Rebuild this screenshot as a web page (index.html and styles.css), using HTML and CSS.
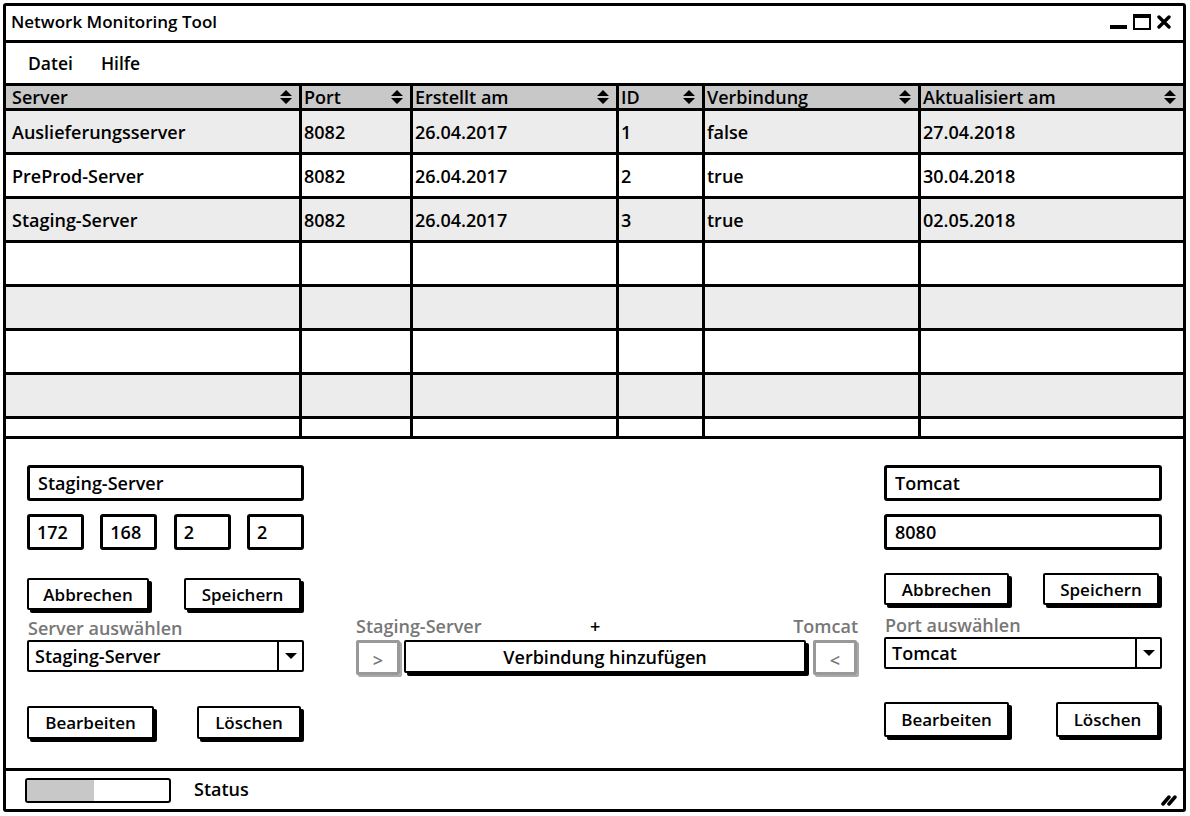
FILE: index.html
```html
<!DOCTYPE html>
<html lang="de">
<head>
<meta charset="utf-8">
<title>Network Monitoring Tool</title>
<link rel="stylesheet" href="styles.css">
</head>
<body>
<div class="window">
  <div class="titlebar">
    <span class="title">Network Monitoring Tool</span>
    <div class="winctrls">
      <span class="wc-min"></span>
      <span class="wc-max"></span>
      <svg class="wc-close" width="14" height="14" viewBox="0 0 14 14"><path d="M2 2 L12 12 M12 2 L2 12" stroke="#000" stroke-width="3.4" stroke-linecap="round"/></svg>
    </div>
  </div>
  <div class="menubar">
    <span class="menu-item">Datei</span>
    <span class="menu-item">Hilfe</span>
  </div>
  <div class="table">
    <div class="row head">
      <div class="cell">Server<svg class="sort" width="14" height="16" viewBox="0 0 14 16"><path d="M1 7 L7 1 L13 7 Z M1 9 L13 9 L7 15 Z" fill="#000"/></svg></div>
      <div class="cell">Port<svg class="sort" width="14" height="16" viewBox="0 0 14 16"><path d="M1 7 L7 1 L13 7 Z M1 9 L13 9 L7 15 Z" fill="#000"/></svg></div>
      <div class="cell">Erstellt am<svg class="sort" width="14" height="16" viewBox="0 0 14 16"><path d="M1 7 L7 1 L13 7 Z M1 9 L13 9 L7 15 Z" fill="#000"/></svg></div>
      <div class="cell">ID<svg class="sort" width="14" height="16" viewBox="0 0 14 16"><path d="M1 7 L7 1 L13 7 Z M1 9 L13 9 L7 15 Z" fill="#000"/></svg></div>
      <div class="cell">Verbindung<svg class="sort" width="14" height="16" viewBox="0 0 14 16"><path d="M1 7 L7 1 L13 7 Z M1 9 L13 9 L7 15 Z" fill="#000"/></svg></div>
      <div class="cell">Aktualisiert am<svg class="sort" width="14" height="16" viewBox="0 0 14 16"><path d="M1 7 L7 1 L13 7 Z M1 9 L13 9 L7 15 Z" fill="#000"/></svg></div>
    </div>
    <div class="row alt">
      <div class="cell">Auslieferungsserver</div><div class="cell">8082</div><div class="cell">26.04.2017</div><div class="cell">1</div><div class="cell">false</div><div class="cell">27.04.2018</div>
    </div>
    <div class="row">
      <div class="cell">PreProd-Server</div><div class="cell">8082</div><div class="cell">26.04.2017</div><div class="cell">2</div><div class="cell">true</div><div class="cell">30.04.2018</div>
    </div>
    <div class="row alt">
      <div class="cell">Staging-Server</div><div class="cell">8082</div><div class="cell">26.04.2017</div><div class="cell">3</div><div class="cell">true</div><div class="cell">02.05.2018</div>
    </div>
    <div class="row"><div class="cell"></div><div class="cell"></div><div class="cell"></div><div class="cell"></div><div class="cell"></div><div class="cell"></div></div>
    <div class="row alt"><div class="cell"></div><div class="cell"></div><div class="cell"></div><div class="cell"></div><div class="cell"></div><div class="cell"></div></div>
    <div class="row"><div class="cell"></div><div class="cell"></div><div class="cell"></div><div class="cell"></div><div class="cell"></div><div class="cell"></div></div>
    <div class="row alt"><div class="cell"></div><div class="cell"></div><div class="cell"></div><div class="cell"></div><div class="cell"></div><div class="cell"></div></div>
    <div class="row partial"><div class="cell"></div><div class="cell"></div><div class="cell"></div><div class="cell"></div><div class="cell"></div><div class="cell"></div></div>
  </div>

  <div class="panel">
    <div class="col col-left">
      <div class="input">Staging-Server</div>
      <div class="ip-row">
        <div class="input ip">172</div>
        <div class="input ip">168</div>
        <div class="input ip">2</div>
        <div class="input ip">2</div>
      </div>
      <div class="btn-row btn-row-1">
        <div class="btn btn-abbr">Abbrechen</div>
        <div class="btn btn-speich">Speichern</div>
      </div>
      <div class="label label-left">Server auswählen</div>
      <div class="select">
        <span class="select-text">Staging-Server</span>
        <span class="select-arrow"><svg width="12" height="8" viewBox="0 0 12 8"><path d="M0 1 L12 1 L6 7 Z" fill="#000"/></svg></span>
      </div>
      <div class="btn-row btn-row-2">
        <div class="btn btn-bearb">Bearbeiten</div>
        <div class="btn btn-losch">Löschen</div>
      </div>
    </div>

    <div class="col col-center">
      <div class="conn-labels">
        <span class="glabel">Staging-Server</span>
        <span class="plus">+</span>
        <span class="glabel glabel-right">Tomcat</span>
      </div>
      <div class="conn-row">
        <div class="gbtn">&gt;</div>
        <div class="btn btn-conn">Verbindung hinzufügen</div>
        <div class="gbtn">&lt;</div>
      </div>
    </div>

    <div class="col col-right">
      <div class="input">Tomcat</div>
      <div class="input input-port">8080</div>
      <div class="btn-row btn-row-r1">
        <div class="btn btn-abbr-r">Abbrechen</div>
        <div class="btn btn-speich-r">Speichern</div>
      </div>
      <div class="label label-right">Port auswählen</div>
      <div class="select">
        <span class="select-text">Tomcat</span>
        <span class="select-arrow"><svg width="12" height="8" viewBox="0 0 12 8"><path d="M0 1 L12 1 L6 7 Z" fill="#000"/></svg></span>
      </div>
      <div class="btn-row btn-row-r2">
        <div class="btn btn-bearb-r">Bearbeiten</div>
        <div class="btn btn-losch-r">Löschen</div>
      </div>
    </div>
  </div>

  <div class="statusbar">
    <div class="progress"><div class="progress-fill"></div></div>
    <span class="status-text">Status</span>
    <svg class="grip" width="18" height="18" viewBox="0 0 18 18"><path d="M3 16 L9 9 M9 16 L15 9" stroke="#000" stroke-width="3.5" stroke-linecap="round"/></svg>
  </div>
</div>
</body>
</html>
```

FILE: styles.css
```css
* { box-sizing: border-box; }
html, body { margin: 0; padding: 0; background: #fff; }
body {
  font-family: "Open Sans", "Liberation Sans", sans-serif;
  font-size: 18px;
  font-weight: 600;
  color: #000;
}

.window {
  margin: 3px 0 0 3px;
  width: 1183px;
  height: 809px;
  border: 3px solid #000;
  border-radius: 3px;
  display: flex;
  flex-direction: column;
}

/* title bar */
.titlebar {
  height: 37px;
  border-bottom: 3px solid #000;
  display: flex;
  align-items: center;
  justify-content: space-between;
  padding: 0 12px 0 5px;
  flex: none;
}
.title { font-size: 17px; line-height: 20px; margin-top: -3px; }
.winctrls { display: flex; align-items: flex-end; gap: 6px; margin-top: -3px; }
.wc-min { width: 17px; height: 4px; background: #000; display: block; margin-bottom: 1px; }
.wc-max { width: 18px; height: 16px; border: 2px solid #000; border-top-width: 4px; display: block; }
.wc-close { display: block; margin-bottom: 1px; }

/* menu */
.menubar {
  height: 43px;
  border-bottom: 3px solid #000;
  display: flex;
  align-items: center;
  padding-left: 22px;
  gap: 28px;
  flex: none;
}
.menu-item { font-size: 17.5px; }

/* table */
.table { flex: none; border-bottom: 3px solid #000; }
.row {
  display: grid;
  grid-template-columns: 296px 111px 206px 86px 216px 1fr;
  height: 44px;
  border-bottom: 3px solid #000;
}
.row.alt { background: #ececec; }
.row.head { height: 25px; background: #c8c8c8; }
.row.partial { height: 17px; border-bottom: 0; }
.cell {
  border-right: 3px solid #000;
  padding-left: 2px;
  display: flex;
  align-items: center;
  font-size: 18px;
  white-space: nowrap;
}
.cell:first-child { padding-left: 6px; }
.cell:last-child { border-right: 0; }
.row.head .cell { justify-content: space-between; padding-right: 6px; line-height: 20px; }
.sort { flex: none; }

/* panel */
.panel {
  flex: none;
  height: 332px;
  border-bottom: 3px solid #000;
  display: flex;
  padding: 26px 21px 0 21px;
}
.col { display: flex; flex-direction: column; }
.col-left { width: 277px; }
.col-center { width: 502px; margin-left: 52px; padding-top: 151px; }
.col-right { width: 278px; margin-left: 26px; }

.input {
  height: 36px;
  border: 3px solid #000;
  border-radius: 3px;
  display: flex;
  align-items: center;
  padding-left: 8px;
  font-size: 18px;
}
.ip-row { display: flex; justify-content: space-between; margin-top: 13px; }
.ip { width: 57px; padding-left: 7px; }
.input-port { margin-top: 13px; }

.btn {
  height: 32px;
  border: 2px solid #000;
  border-radius: 2px;
  box-shadow: 3px 3px 0 #000;
  display: flex;
  align-items: center;
  justify-content: center;
  font-size: 17px;
  background: #fff;
}
.btn-row { display: flex; justify-content: space-between; padding-right: 3px; }
.btn-row-1 { margin-top: 28px; }
.btn-abbr { width: 122px; }
.btn-speich { width: 117px; }
.btn-row-2 { margin-top: 34px; }
.btn-row-2 .btn { height: 33px; }
.btn-bearb { width: 127px; }
.btn-losch { width: 104px; }

.btn-row-r1 { margin-top: 23px; }
.btn-abbr-r { width: 125px; }
.btn-speich-r { width: 116px; }
.btn-row-r2 { margin-top: 33px; }
.btn-row-r2 .btn { height: 35px; }
.btn-bearb-r { width: 125px; }
.btn-losch-r { width: 103px; }

.label {
  color: #777;
  font-size: 18px;
  line-height: 20px;
  height: 22px;
  padding-left: 1px;
}
.label-left { margin-top: 8px; }
.label-right { margin-top: 10px; }
.select {
  height: 32px;
  border: 2px solid #000;
  border-radius: 2px;
  display: flex;
  align-items: center;
}
.select-text { flex: 1; padding-left: 6px; font-size: 18px; }
.select-arrow {
  width: 25px;
  align-self: stretch;
  border-left: 2px solid #000;
  display: flex;
  align-items: center;
  justify-content: center;
}
.select-arrow svg { display: block; }

/* center */
.conn-labels {
  display: grid;
  grid-template-columns: 234px auto 1fr;
  align-items: center;
  height: 20px;
  line-height: 20px;
}
.glabel { color: #777; font-size: 18px; }
.glabel-right { text-align: right; }
.plus { font-size: 18px; }
.conn-row { display: flex; margin-top: 4px; align-items: flex-start; }
.gbtn {
  width: 44px;
  height: 35px;
  border: 3px solid #999;
  border-radius: 2px;
  box-shadow: 2px 2px 0 #aaa;
  color: #777;
  display: flex;
  align-items: center;
  justify-content: center;
  font-size: 18px;
  padding-top: 4px;
  flex: none;
}
.btn-conn { width: 402px; height: 33px; margin: 0 7px 0 4px; flex: none; font-size: 18px; }

/* status bar */
.statusbar {
  flex: 1;
  display: flex;
  align-items: center;
  padding-left: 19px;
  position: relative;
}
.progress {
  width: 146px;
  height: 25px;
  border: 2px solid #000;
  border-radius: 3px;
  overflow: hidden;
}
.progress-fill { width: 67px; height: 100%; background: #c8c8c8; }
.status-text { margin-left: 23px; font-size: 18px; margin-top: -2px; }
.grip { position: absolute; right: 5px; bottom: 3px; }
```
